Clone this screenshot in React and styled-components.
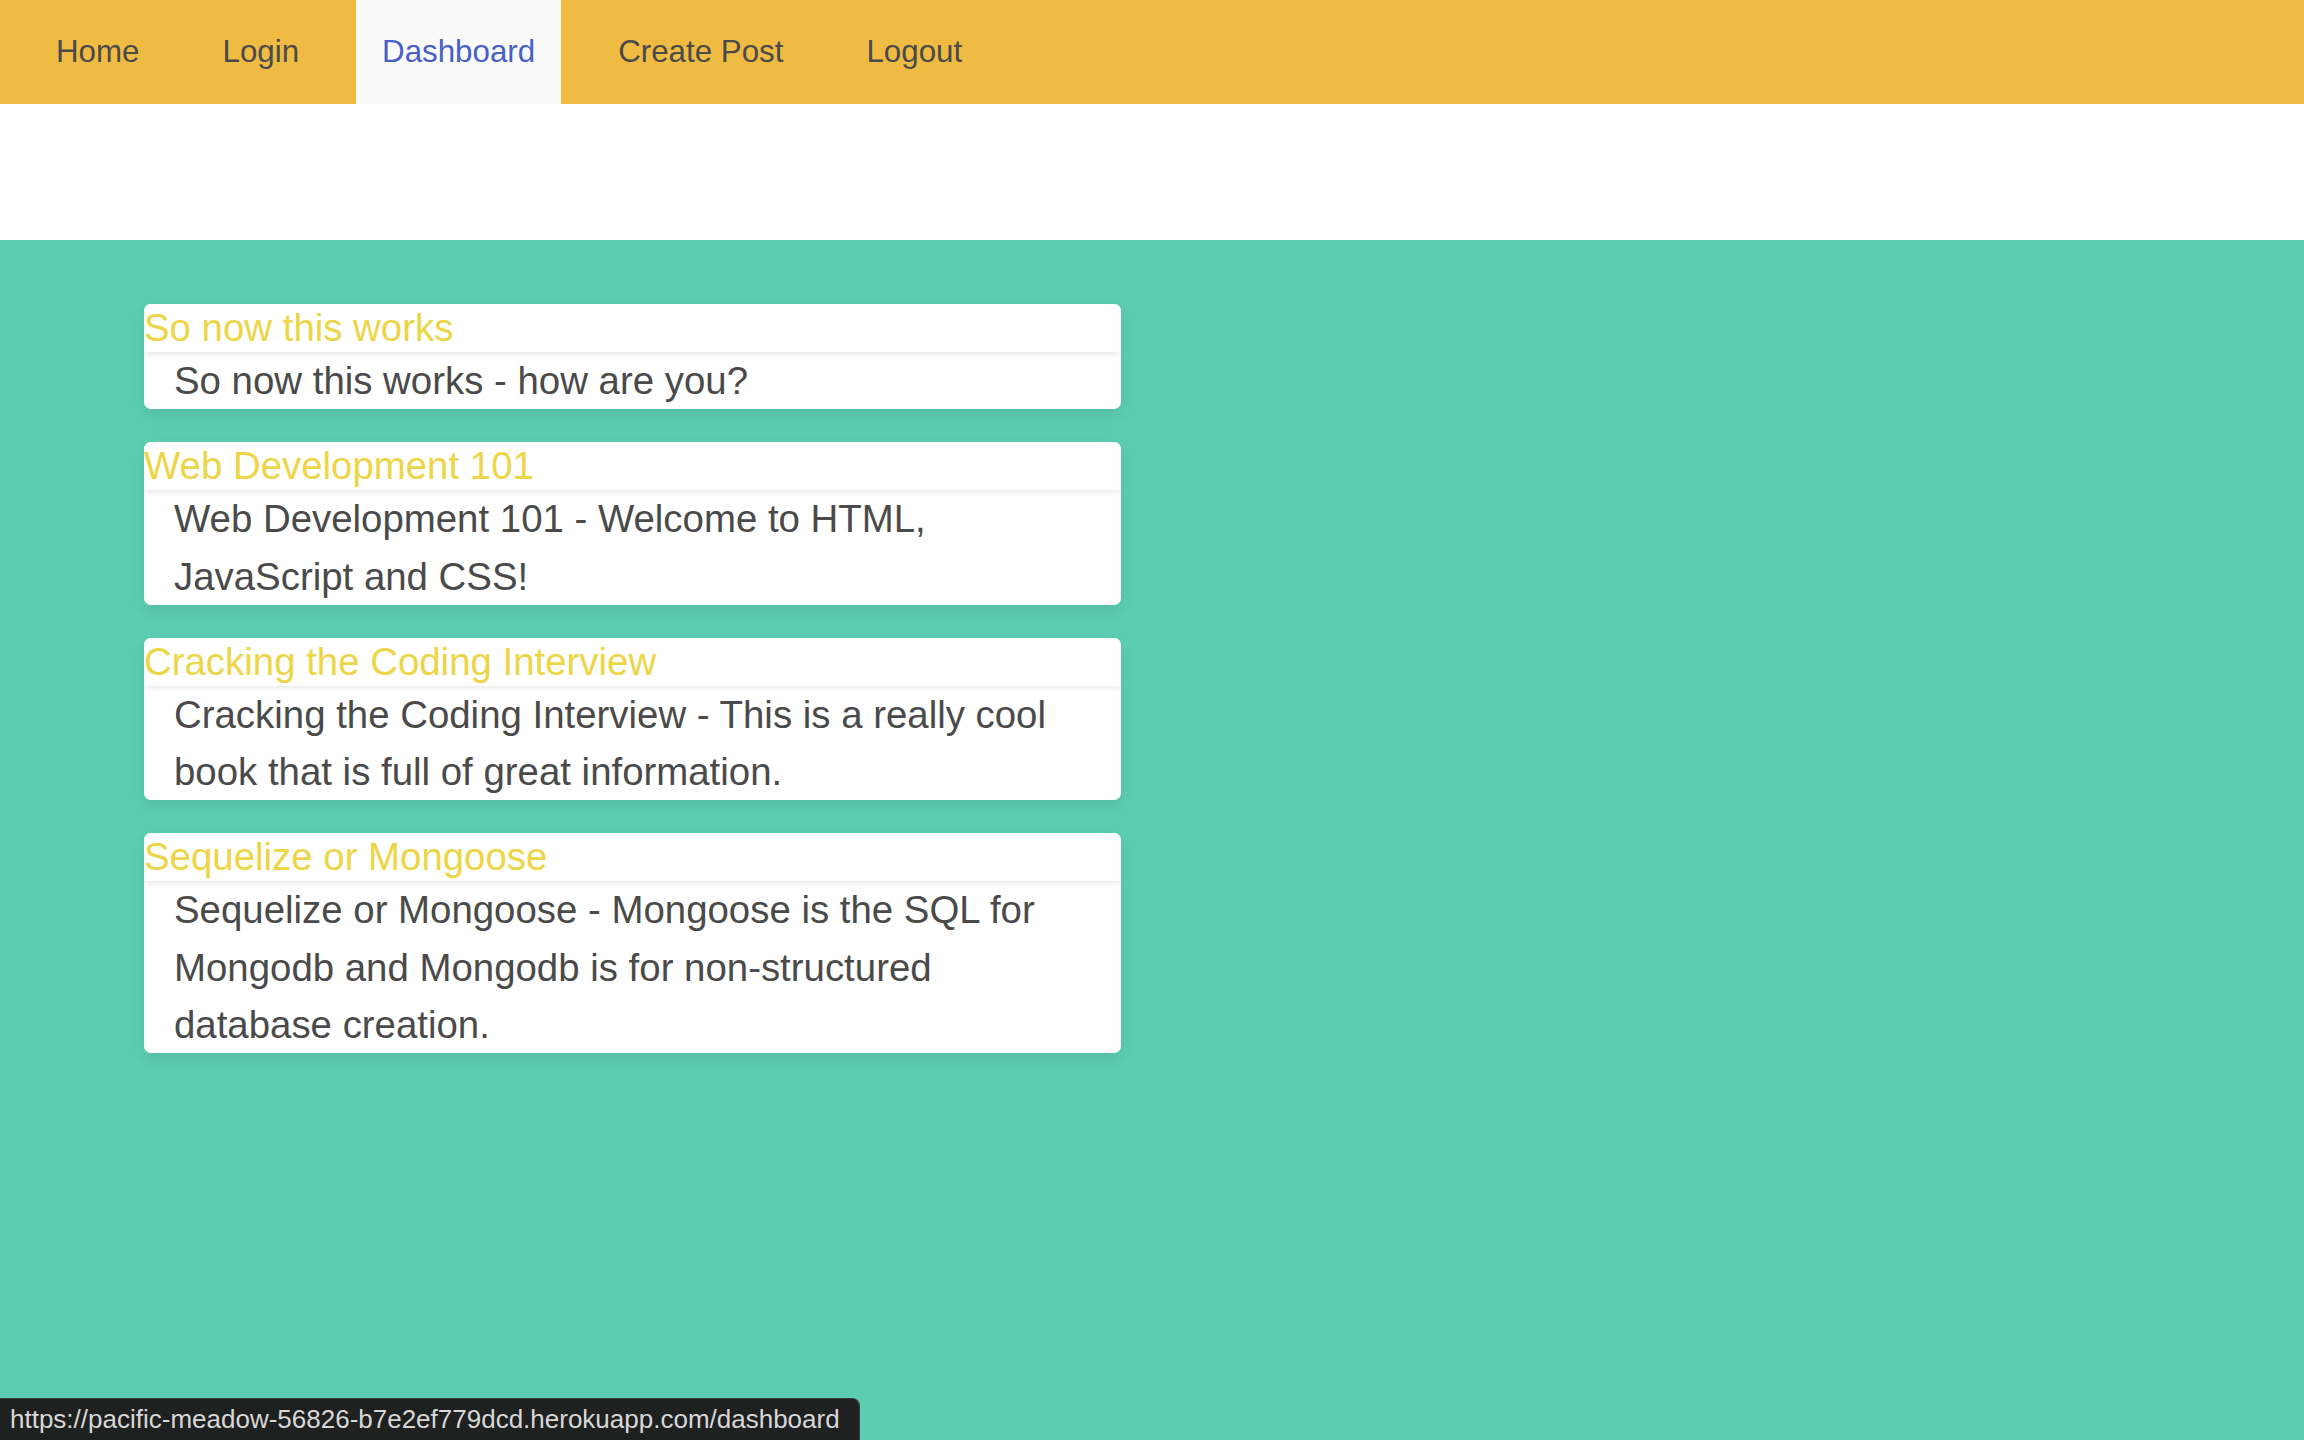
import React from "react"
import styled, { createGlobalStyle } from "styled-components"

const GlobalStyle = createGlobalStyle`
  html, body {
    margin: 0;
    padding: 0;
    height: 100%;
  }
  body {
    font-family: "Liberation Sans", Arial, sans-serif;
    color: #4a4a4a;
    background: #fff;
  }
  #root {
    min-height: 100%;
    display: flex;
    flex-direction: column;
  }
`

const posts = [
  {
    title: "So now this works",
    body: "So now this works - how are you?",
  },
  {
    title: "Web Development 101",
    body: "Web Development 101 - Welcome to HTML, JavaScript and CSS!",
  },
  {
    title: "Cracking the Coding Interview",
    body: "Cracking the Coding Interview - This is a really cool book that is full of great information.",
  },
  {
    title: "Sequelize or Mongoose",
    body: "Sequelize or Mongoose - Mongoose is the SQL for Mongodb and Mongodb is for non-structured database creation.",
  },
]

const links = ["Home", "Login", "Dashboard", "Create Post", "Logout"]

export default function App() {
  return (
    <Page>
      <GlobalStyle />
      <NavBar>
        {links.map(label => (
          <NavItem key={label} $active={label === "Dashboard"}>
            {label}
          </NavItem>
        ))}
      </NavBar>
      <Spacer />
      <Main>
        <PostList>
          {posts.map(post => (
            <PostCard key={post.title}>
              <PostTitle>{post.title}</PostTitle>
              <PostBody>{post.body}</PostBody>
            </PostCard>
          ))}
        </PostList>
      </Main>
      <StatusBar>https://pacific-meadow-56826-b7e2ef779dcd.herokuapp.com/dashboard</StatusBar>
    </Page>
  )
}

const Page = styled.div`
  flex: 1;
  display: flex;
  flex-direction: column;
  min-height: 100vh;
`

const NavBar = styled.nav`
  height: 104px;
  display: flex;
  align-items: stretch;
  gap: 31px;
  padding-left: 30px;
  background: #f0bb43;
`

const NavItem = styled.a`
  display: flex;
  align-items: center;
  padding: 0 26px;
  font-size: 31.3px;
  cursor: pointer;
  color: ${props => (props.$active ? "#485fc7" : "#4a4a4a")};
  background: ${props => (props.$active ? "#fafafa" : "transparent")};
`

const Spacer = styled.div`
  height: 136px;
  background: #fff;
`

const Main = styled.main`
  flex: 1;
  background: #5ccdb1;
  padding: 64px 0 64px 144px;
`

const PostList = styled.div`
  width: 977px;
  display: flex;
  flex-direction: column;
  gap: 33px;
`

const PostCard = styled.article`
  background: #fff;
  border-radius: 7px;
  overflow: hidden;
  box-shadow: 0 6px 14px rgba(0, 0, 0, 0.08);
`

const PostTitle = styled.h2`
  position: relative;
  z-index: 1;
  margin: 0;
  font-size: 38.4px;
  font-weight: 400;
  line-height: 48px;
  color: #edd548;
  background: #fff;
  box-shadow: 0 2px 6px rgba(0, 0, 0, 0.09);
`

const PostBody = styled.p`
  margin: 0;
  padding: 0 30px;
  font-size: 38.4px;
  line-height: 57.3px;
  color: #4a4a4a;
`

const StatusBar = styled.div`
  position: fixed;
  left: 0;
  bottom: 0;
  height: 42px;
  display: flex;
  align-items: center;
  padding: 0 19px 0 10px;
  background: #1f2020;
  color: #d8d8d8;
  font-size: 26px;
  border-top-right-radius: 8px;
  border: 1px solid #3a3a3a;
  border-left: none;
  border-bottom: none;
  box-sizing: border-box;
`
